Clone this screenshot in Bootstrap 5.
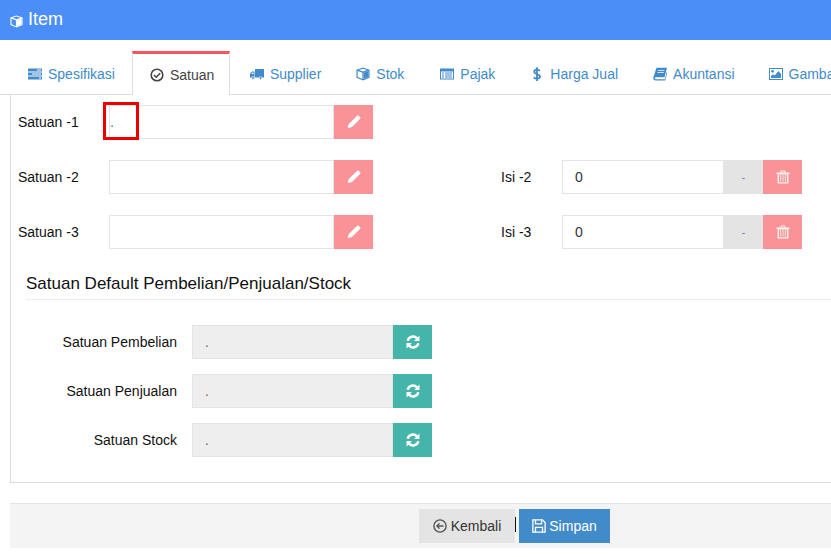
<!DOCTYPE html>
<html lang="id">
<head>
<meta charset="utf-8">
<title>Item</title>
<link rel="stylesheet" href="https://cdn.jsdelivr.net/npm/bootstrap@5.3.0/dist/css/bootstrap.min.css">
<style>
html, body { height: 557px; overflow: hidden; }
body { font-family: "Liberation Sans", Arial, sans-serif; font-size: 14px; color: #111; background: #fff; width: 831px; }
.app-head { height: 40px; background: #4b8ef8; color: #fff; font-size: 18px; padding: 0 10px 2px; line-height: 38px; gap: 5px; }
.app-head svg { width: 13px; height: 13px; margin-top: 4px; }
.app-main { width: 831px; overflow: hidden; padding: 11px 0 0 10px; }
.tab-bar { height: 44px; border-bottom: 1px solid #ddd; flex-wrap: nowrap; width: 1000px; margin-left: -10px; padding-left: 10px; }
.tab-bar .nav-link { height: 43px; padding: 3px 16px 0 18px; margin: 0; border: 0; border-radius: 0; color: #428bca; font-size: 14px; display: flex; align-items: center; gap: 6px; white-space: nowrap; }
.tab-bar .nav-link svg { width: 14px; height: 14px; flex: none; }
.tab-bar .nav-link.active { color: #444; border: 1px solid #ddd; border-top: 3px solid #f4565f; border-bottom: 0; background: #fff; padding: 1px 14px 0 17px; height: 44px; width: 98px; }
.tab-bar .shift-1 { margin-left: 1px; }
.tab-bar .shift-2 { margin-left: 2px; }
.tab-pane-box { border: 0 solid #ddd; border-width: 0 0 1px 1px; height: 388px; padding: 10px 0 0 7px; width: 990px; }
.form-line { height: 34px; margin-bottom: 21px; align-items: center; }
.lbl-a { width: 91px; margin: 0; }
.lbl-b { width: 61px; margin: 0 0 0 128px; }
.field-a { width: 264px; position: relative; }
.field-b { width: 240px; }
.field-a .form-control, .field-b .form-control, .field-c .form-control { height: 34px; border-radius: 0; border: 1px solid #e4e4e4; font-size: 14px; color: #333; box-shadow: none; }
.field-a .form-control { padding: 0; color: #3c6fb5; }
.field-b .form-control { padding: 0 12px; }
.input-group > .act, .input-group > .unit-box { margin-left: 0 !important; }
.act { width: 39px; height: 34px; flex: none; border: 0; border-radius: 0 !important; padding: 0; display: flex; align-items: center; justify-content: center; color: #fff; }
.act-red { background: #f99397; }
.act-teal { background: #45b5aa; }
.act svg { width: 14px; height: 14px; }
.unit-box { width: 39px; height: 34px; flex: none; background: #e4e4e4; color: #6f6fb0; display: flex; align-items: center; justify-content: center; font-size: 10px; border: 0; border-radius: 0; padding: 0; }
.red-mark { position: absolute; left: -6px; top: -3px; width: 36px; height: 38px; border: 3px solid #ee0000; pointer-events: none; margin-left: 0 !important; }
.sect-title { font-size: 17px; font-weight: 400; margin: 0 0 25px 8px; padding: 5px 0 6px; line-height: 18px; border-bottom: 1px solid #eee; width: 960px; color: #111; }
.def-line { height: 34px; margin-bottom: 15px; align-items: center; }
.lbl-c { width: 159px; text-align: right; margin: 0 15px 0 0; }
.field-c { width: 240px; }
.field-c .form-control { background: #eee; padding: 0 12px; color: #a35b1e; }
.foot-bar { height: 45px; background: #f4f4f4; border-top: 1px solid #e4e4e4; margin-top: 20px; padding: 5px 0 0 409px; width: 990px; align-items: flex-start; }
.foot-btn { height: 34px; border: 0; border-radius: 0; font-size: 14px; display: flex; align-items: center; justify-content: center; gap: 4px; padding: 0; }
.foot-back { width: 96px; background: #e4e4e4; color: #333; }
.foot-save { width: 91px; background: #428bca; color: #fff; gap: 3px; }
.foot-btn svg { width: 14px; height: 14px; }
.caret-mark { width: 1px; height: 15px; background: #111; margin: 8px 3px 0 0; }
</style>
</head>
<body>
<svg width="0" height="0" class="position-absolute">
  <defs>
    <symbol id="i-cube" viewBox="0 0 16 16"><path fill="currentColor" fill-rule="evenodd" d="M8 .5 15.500 3.200v9L8 15.500.5 12.200v-9zM3.300 3.500 8 5.200l4.700-1.700L8 1.900zM1.900 4.700v6.600l5.400 2.400V6.600z M8.700 6.600v7.100l5.400-2.400V4.700z"/><path fill="currentColor" d="M8.700 6.600 14.100 4.700v6.600l-5.400 2.400z"/></symbol>
    <symbol id="i-pen" viewBox="0 0 14 14"><path fill="#fff" d="M10.200.8c.5-.4 1-.4 1.500 0l1.500 1.500c.4.5.4 1 0 1.500L5 12 1.500 13 .7 12.300l1.100-3.400z"/></symbol>
    <symbol id="i-trash" viewBox="0 0 14 14"><path fill="#fdf3ef" fill-rule="evenodd" d="M5 .5h4L10 2.500h3.500v1.500h-1.100V13.500H1.600V4H.5V2.500H4zM5.500 1.500l-.3 1h3.600l-.3-1zM3 4.500v7.700h8V4.500z"/><path fill="#f0dcd4" d="M4 5h1.200v6.500H4zM6.400 5h1.200v6.500H6.400zM8.800 5H10v6.500H8.800z"/></symbol>
    <symbol id="i-sync" viewBox="0 0 14 14"><path fill="none" stroke="#fff" stroke-width="2.500" d="M1.700 5.800A5.400 5.400 0 0 1 11 3.300M12.300 8.200A5.400 5.400 0 0 1 3 10.700"/><path fill="#fff" d="M13.500.5v5.500H8zM.5 13.500V8H6z"/></symbol>
  </defs>
</svg>
<header class="app-head d-flex align-items-center">
  <svg><use href="#i-cube"/></svg>
  <span>Item</span>
</header>
<main class="app-main">
  <ul class="nav tab-bar">
    <li class="nav-item"><a class="nav-link" href="#"><svg viewBox="0 0 14 14"><path fill="currentColor" d="M0 1.500h14v3H0zM0 5.500h14v3H0zM0 9.500h14v3H0z"/><path fill="#fff" d="M9 2.500h4v1H9zM4 6.500h9v1H4zM11 10.500h2v1h-2z"/></svg>Spesifikasi</a></li>
    <li class="nav-item shift-1"><a class="nav-link active" href="#"><svg viewBox="0 0 14 14" fill="none" stroke="currentColor" stroke-width="1.600"><circle cx="7" cy="7" r="5.800"/><path d="M4 7l2.200 2.200 4-4"/></svg>Satuan</a></li>
    <li class="nav-item shift-2"><a class="nav-link" href="#"><svg viewBox="0 0 14 14" fill="currentColor"><path d="M5 2h9v8.500H5z"/><path fill-rule="evenodd" d="M2 4.500h2.500v6H0V6.800zM2.500 5.500 1.300 7h2.200V5.500z"/><circle cx="3" cy="11" r="1.400" stroke="#fff" stroke-width=".6"/><circle cx="10.500" cy="11" r="1.400" stroke="#fff" stroke-width=".6"/></svg>Supplier</a></li>
    <li class="nav-item shift-1"><a class="nav-link" href="#"><svg><use href="#i-cube"/></svg>Stok</a></li>
    <li class="nav-item shift-2"><a class="nav-link" href="#"><svg viewBox="0 0 14 14" fill="currentColor"><path fill-rule="evenodd" d="M0 1.500h14v11H0zM1 4.500v7h12v-7z"/><path d="M2 5.500h2v1H2zM5 5.500h7v1H5zM2 7.500h2v1H2zM5 7.500h7v1H5zM2 9.500h2v1H2zM5 9.500h7v1H5z"/></svg>Pajak</a></li>
    <li class="nav-item shift-1"><a class="nav-link" href="#"><svg viewBox="0 0 14 14" fill="none" stroke="currentColor" stroke-width="1.800"><path d="M10 3.900C9.200 3 8.200 2.700 7 2.700 5.300 2.700 4.200 3.500 4.200 4.700 4.200 7.500 10 6.600 10 9.500c0 1.300-1.300 2.100-3 2.100-1.300 0-2.500-.4-3.300-1.300M7 .3v13.700"/></svg>Harga Jual</a></li>
    <li class="nav-item shift-1"><a class="nav-link" href="#"><svg viewBox="0 0 14 14" fill="currentColor"><path d="M3.500.8H14l-2.500 9.400H2.800c-1.100 0-1.100 2 .2 2h8.800l2-7.500.6.700-2.200 8H2.800C.6 13.400 0 11.600.4 10.200z"/><path fill="#fff" d="M5 3h6.500l-.2.800H4.800zM4.500 5h6.500l-.2.800H4.300z"/></svg>Akuntansi</a></li>
    <li class="nav-item"><a class="nav-link" href="#"><svg viewBox="0 0 14 14" fill="currentColor"><path fill-rule="evenodd" d="M0 1h14v12H0zM1 2v10h12V2z"/><circle cx="3.500" cy="4.300" r="1.400"/><path d="M2 11V9l2-1.800 1.700 1.300L9.500 4 12 7v4z"/></svg>Gambar</a></li>
  </ul>
  <section class="tab-pane-box">
    <div class="d-flex form-line">
      <label class="lbl-a">Satuan -1</label>
      <div class="input-group flex-nowrap field-a">
        <input class="form-control" value="." aria-label="Satuan 1">
        <button class="act act-red" type="button"><svg><use href="#i-pen"/></svg></button>
        <span class="red-mark"></span>
      </div>
    </div>
    <div class="d-flex form-line">
      <label class="lbl-a">Satuan -2</label>
      <div class="input-group flex-nowrap field-a">
        <input class="form-control" aria-label="Satuan 2">
        <button class="act act-red" type="button"><svg><use href="#i-pen"/></svg></button>
      </div>
      <label class="lbl-b">Isi -2</label>
      <div class="input-group flex-nowrap field-b">
        <input class="form-control" value="0" aria-label="Isi 2">
        <span class="unit-box">-</span>
        <button class="act act-red" type="button"><svg><use href="#i-trash"/></svg></button>
      </div>
    </div>
    <div class="d-flex form-line">
      <label class="lbl-a">Satuan -3</label>
      <div class="input-group flex-nowrap field-a">
        <input class="form-control" aria-label="Satuan 3">
        <button class="act act-red" type="button"><svg><use href="#i-pen"/></svg></button>
      </div>
      <label class="lbl-b">Isi -3</label>
      <div class="input-group flex-nowrap field-b">
        <input class="form-control" value="0" aria-label="Isi 3">
        <span class="unit-box">-</span>
        <button class="act act-red" type="button"><svg><use href="#i-trash"/></svg></button>
      </div>
    </div>
    <h5 class="sect-title">Satuan Default Pembelian/Penjualan/Stock</h5>
    <div class="d-flex def-line">
      <label class="lbl-c">Satuan Pembelian</label>
      <div class="input-group flex-nowrap field-c">
        <input class="form-control" value="." readonly aria-label="Satuan Pembelian">
        <button class="act act-teal" type="button"><svg><use href="#i-sync"/></svg></button>
      </div>
    </div>
    <div class="d-flex def-line">
      <label class="lbl-c">Satuan Penjualan</label>
      <div class="input-group flex-nowrap field-c">
        <input class="form-control" value="." readonly aria-label="Satuan Penjualan">
        <button class="act act-teal" type="button"><svg><use href="#i-sync"/></svg></button>
      </div>
    </div>
    <div class="d-flex def-line">
      <label class="lbl-c">Satuan Stock</label>
      <div class="input-group flex-nowrap field-c">
        <input class="form-control" value="." readonly aria-label="Satuan Stock">
        <button class="act act-teal" type="button"><svg><use href="#i-sync"/></svg></button>
      </div>
    </div>
  </section>
  <footer class="foot-bar d-flex">
    <button class="foot-btn foot-back" type="button"><svg viewBox="0 0 16 16" fill="none" stroke="#555" stroke-width="1.600"><circle cx="8" cy="8" r="7"/><path d="M12 8H4.500M7.500 5 4.500 8l3 3"/></svg>Kembali</button>
    <span class="caret-mark"></span>
    <button class="foot-btn foot-save" type="button"><svg viewBox="0 0 16 16" fill="none" stroke="currentColor" stroke-width="1.500"><path d="M1 1h11l3 3v11H1z"/><path d="M4 1v4.500h7V1M4 15V9.500h8V15"/></svg>Simpan</button>
  </footer>
</main>
<script src="https://cdn.jsdelivr.net/npm/bootstrap@5.3.0/dist/js/bootstrap.bundle.min.js"></script>
</body>
</html>
